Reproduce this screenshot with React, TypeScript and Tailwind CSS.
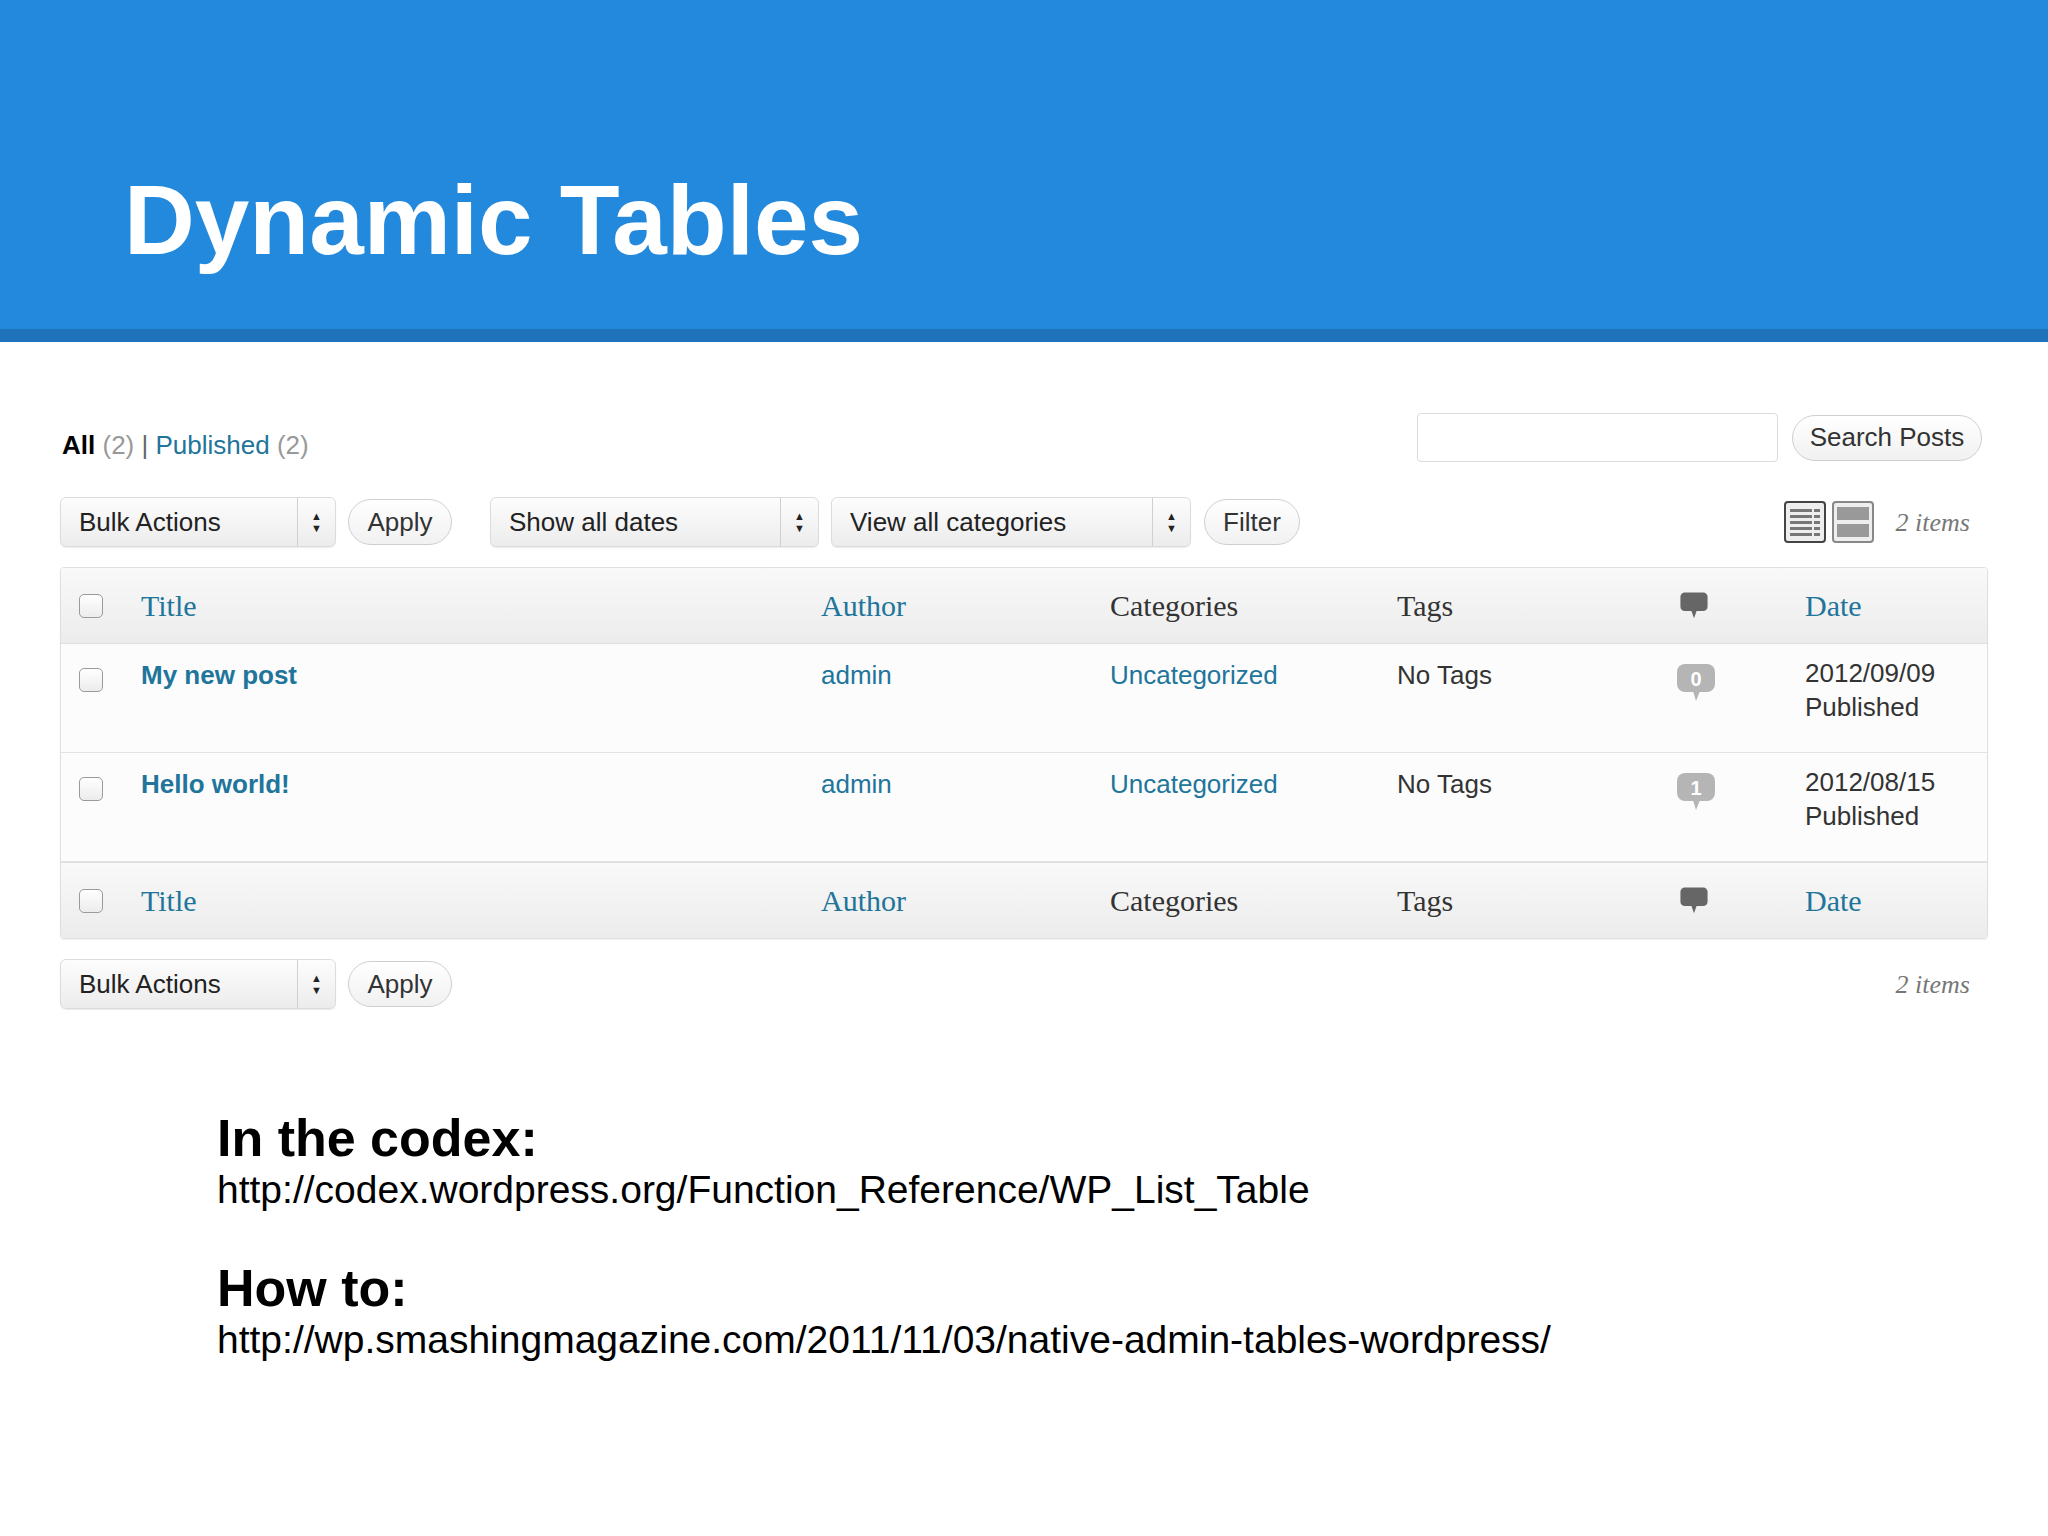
import React from "react";

const serif = { fontFamily: '"Liberation Serif", Georgia, serif' };
const blue = "text-[#21759b]";

function Select({ label, w }: { label: string; w: string }) {
  return (
    <div className={`flex h-[50px] ${w} items-stretch rounded-[6px] border border-[#dcdcdc] bg-gradient-to-b from-[#fdfdfd] to-[#ececec] shadow-[0_1px_1px_rgba(0,0,0,0.08)]`}>
      <div className="flex flex-1 items-center pl-[18px] text-[26px] text-[#222]">{label}</div>
      <div className="flex w-[38px] flex-col items-center justify-center border-l border-[#d0d0d0] text-[11px] leading-[12px] text-[#222]">
        <span>▲</span>
        <span>▼</span>
      </div>
    </div>
  );
}

function Btn({ label, w }: { label: string; w: string }) {
  return (
    <div className={`flex h-[46px] ${w} items-center justify-center rounded-full border border-[#cfcfcf] bg-gradient-to-b from-white to-[#f1f1f1] text-[26px] text-[#333]`}>
      {label}
    </div>
  );
}

function Check() {
  return <div className="h-[24px] w-[24px] rounded-[5px] border border-[#9a9a9a] bg-gradient-to-b from-white to-[#ececec]" />;
}

function Bubble({ n }: { n?: string }) {
  const fill = n === undefined ? "#666" : "#b5b5b5";
  return (
    <svg width="42" height="42" viewBox="0 0 42 42">
      <rect x="2" y="2" width="38" height="28" rx="8" fill={fill} />
      <path d="M18 29 L21 39 L25 29 Z" fill={fill} />
      {n !== undefined && (
        <text x="21" y="24" textAnchor="middle" fontSize="20" fontWeight="bold" fill="#fff" fontFamily="Liberation Sans, sans-serif">{n}</text>
      )}
    </svg>
  );
}

const cols = "grid grid-cols-[80px_680px_289px_287px_278px_130px_1fr]";

function HeadRow({ top }: { top: boolean }) {
  return (
    <div className={`${cols} h-[76px] items-center bg-gradient-to-b from-[#f9f9f9] to-[#ececec] ${top ? "border-b" : "border-t"} border-[#dfdfdf] text-[30px]`} style={serif}>
      <div className="pl-[18px]"><Check /></div>
      <div className={blue}>Title</div>
      <div className={blue}>Author</div>
      <div className="text-[#333]">Categories</div>
      <div className="text-[#333]">Tags</div>
      <div className="pl-[4px]"><svg width="30" height="30" viewBox="0 0 42 42"><rect x="2" y="2" width="38" height="26" rx="6" fill="#666" /><path d="M17 27 L21 38 L25 27 Z" fill="#666" /></svg></div>
      <div className={blue}>Date</div>
    </div>
  );
}

function Row({ title, n, date }: { title: string; n: string; date: string }) {
  return (
    <div className={`${cols} h-[109px] items-start border-b border-[#e3e3e3] bg-[#fcfcfc] pt-[12px] text-[26px]`}>
      <div className="pl-[18px] pt-[12px]"><Check /></div>
      <div className={`${blue} font-bold`}>{title}</div>
      <div className={blue}>admin</div>
      <div className={blue}>Uncategorized</div>
      <div className="text-[#333]">No Tags</div>
      <div className="pt-[6px]"><Bubble n={n} /></div>
      <div className="leading-[34px] text-[#333]">{date}<br />Published</div>
    </div>
  );
}

export default function App() {
  return (
    <div className="h-[1536px] w-[2048px] bg-white" style={{ fontFamily: '"Liberation Sans", Arial, sans-serif' }}>
      <div className="h-[329px] bg-[#2389dc] pl-[124px] pt-[170px]">
        <h1 className="text-[98px] font-bold leading-[100px] text-white" style={{ fontFamily: "Arimo, 'Liberation Sans', Arial, sans-serif" }}>Dynamic Tables</h1>
      </div>
      <div className="h-[13px] bg-[#1f73ba]" />

      <div className="px-[60px] pt-[68px]">
        <div className="flex items-center justify-between pr-[6px]">
          <div className="pt-[16px] pl-[2px] text-[26px]">
            <span className="font-bold text-black">All</span> <span className="text-[#999]">(2)</span>{" "}
            <span className="text-[#666]">|</span> <span className={blue}>Published</span> <span className="text-[#999]">(2)</span>
          </div>
          <div className="flex items-center gap-[14px]">
            <div className="h-[49px] w-[361px] rounded-[4px] border border-[#dcdcdc] bg-white" />
            <Btn label="Search Posts" w="w-[190px]" />
          </div>
        </div>

        <div className="mt-[32px] flex items-center">
          <Select label="Bulk Actions" w="w-[276px]" />
          <div className="ml-[12px]"><Btn label="Apply" w="w-[104px]" /></div>
          <div className="ml-[38px]"><Select label="Show all dates" w="w-[329px]" /></div>
          <div className="ml-[12px]"><Select label="View all categories" w="w-[360px]" /></div>
          <div className="ml-[13px]"><Btn label="Filter" w="w-[96px]" /></div>
          <div className="flex-1" />
          <div className="flex items-center gap-[6px]">
            <svg width="42" height="42" viewBox="0 0 42 42"><rect x="1" y="1" width="40" height="40" rx="3" fill="#eee" stroke="#444" strokeWidth="2" />{[8, 14, 20, 26, 32].map(y => <g key={y}><rect x="6" y={y} width="22" height="3" fill="#777" /><rect x="30" y={y} width="6" height="3" fill="#777" /></g>)}</svg>
            <svg width="42" height="42" viewBox="0 0 42 42"><rect x="1" y="1" width="40" height="40" rx="3" fill="#eee" stroke="#888" strokeWidth="2" /><rect x="5" y="6" width="32" height="13" fill="#999" /><rect x="5" y="23" width="32" height="13" fill="#999" /></svg>
          </div>
          <div className="ml-[22px] mr-[18px] text-[26px] italic text-[#777]" style={serif}>2 items</div>
        </div>

        <div className="mt-[20px] overflow-hidden rounded-[4px] border border-[#dfdfdf] shadow-[0_1px_2px_rgba(0,0,0,0.06)]">
          <HeadRow top />
          <Row title="My new post" n="0" date="2012/09/09" />
          <Row title="Hello world!" n="1" date="2012/08/15" />
          <HeadRow top={false} />
        </div>

        <div className="mt-[20px] flex items-center">
          <Select label="Bulk Actions" w="w-[276px]" />
          <div className="ml-[12px]"><Btn label="Apply" w="w-[104px]" /></div>
          <div className="flex-1" />
          <div className="mr-[18px] text-[26px] italic text-[#777]" style={serif}>2 items</div>
        </div>
      </div>

      <div className="pl-[217px] pt-[100px] text-black">
        <div className="text-[52px] font-bold leading-[58px]">In the codex:</div>
        <div className="text-[39px] leading-[46px]">http://codex.wordpress.org/Function_Reference/WP_List_Table</div>
        <div className="mt-[46px] text-[52px] font-bold leading-[58px]">How to:</div>
        <div className="text-[39px] leading-[46px]">http://wp.smashingmagazine.com/2011/11/03/native-admin-tables-wordpress/</div>
      </div>
    </div>
  );
}
